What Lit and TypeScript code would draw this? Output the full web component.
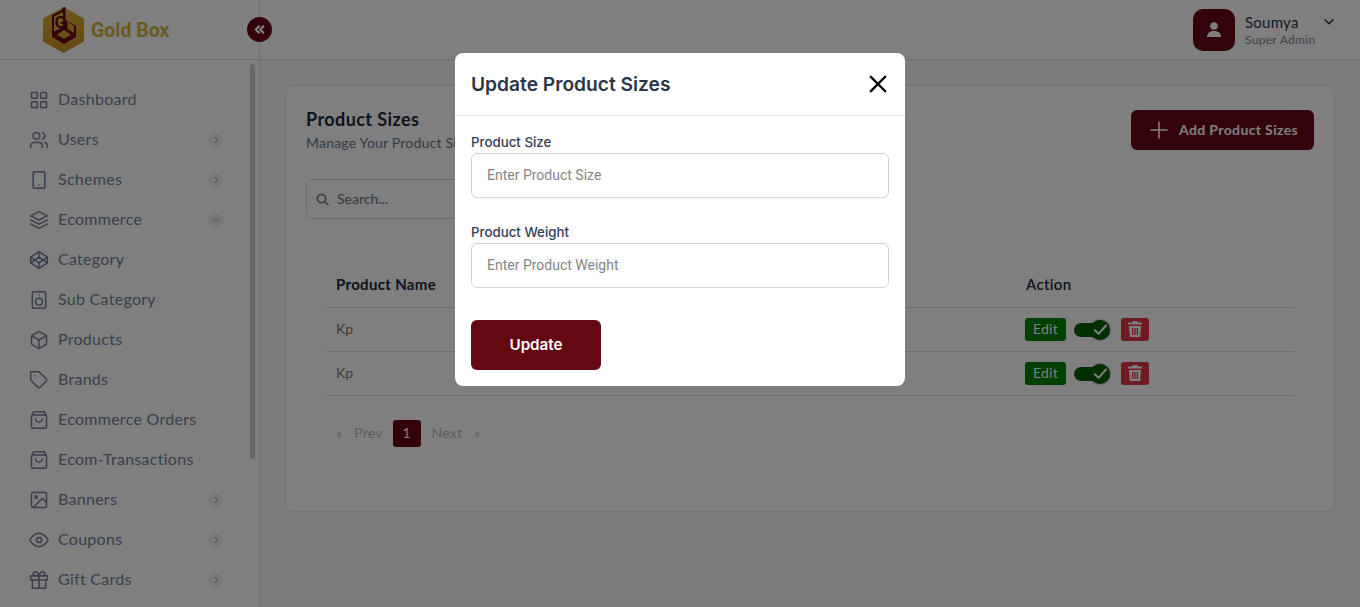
import { LitElement, html, css, svg } from "lit";
import { customElement } from "lit/decorators.js";

const icons: Record<string, any> = {
  grid: svg`<rect x="3" y="3" width="7" height="7" rx="1"/><rect x="14" y="3" width="7" height="7" rx="1"/><rect x="14" y="14" width="7" height="7" rx="1"/><rect x="3" y="14" width="7" height="7" rx="1"/>`,
  users: svg`<path d="M16 21v-2a4 4 0 0 0-4-4H6a4 4 0 0 0-4 4v2"/><circle cx="9" cy="7" r="4"/><path d="M22 21v-2a4 4 0 0 0-3-3.87"/><path d="M16 3.13a4 4 0 0 1 0 7.75"/>`,
  tablet: svg`<rect x="5" y="2" width="14" height="20" rx="2"/><line x1="12" y1="18" x2="12.01" y2="18"/>`,
  layers: svg`<path d="M12 2 2 7l10 5 10-5-10-5z"/><path d="m2 17 10 5 10-5"/><path d="m2 12 10 5 10-5"/>`,
  codepen: svg`<path d="M12 2 22 8.5v7L12 22 2 15.5v-7L12 2z"/><path d="M12 22v-6.5"/><path d="M22 8.5l-10 7-10-7"/><path d="M2 15.5l10-7 10 7"/><path d="M12 2v6.5"/>`,
  speaker: svg`<rect x="4" y="2" width="16" height="20" rx="2"/><circle cx="12" cy="14" r="4"/><line x1="12" y1="6" x2="12.01" y2="6"/>`,
  box: svg`<path d="M21 16V8a2 2 0 0 0-1-1.73l-7-4a2 2 0 0 0-2 0l-7 4A2 2 0 0 0 3 8v8a2 2 0 0 0 1 1.73l7 4a2 2 0 0 0 2 0l7-4A2 2 0 0 0 21 16z"/><path d="M3.3 7 12 12l8.7-5"/><path d="M12 22V12"/>`,
  tag: svg`<path d="M20.6 13.4l-7.2 7.2a2 2 0 0 1-2.8 0L2 12V2h10l8.6 8.6a2 2 0 0 1 0 2.8z"/><line x1="7" y1="7" x2="7.01" y2="7"/>`,
  bag: svg`<path d="M6 2h12"/><path d="M6 2 3.500 6M18 2l2.500 4"/><rect x="3" y="6" width="18" height="16" rx="2"/><path d="M8 10.500a4 4 0 0 0 8 0"/>`,
  image: svg`<rect x="3" y="3" width="18" height="18" rx="2"/><circle cx="8.500" cy="8.500" r="1.500"/><path d="M21 15l-5-5L5 21"/>`,
  eye: svg`<path d="M1 12s4-8 11-8 11 8 11 8-4 8-11 8-11-8-11-8z"/><circle cx="12" cy="12" r="3"/>`,
  gift: svg`<polyline points="20 12 20 22 4 22 4 12"/><rect x="2" y="7" width="20" height="5"/><line x1="12" y1="22" x2="12" y2="7"/><path d="M12 7H7.500a2.500 2.500 0 0 1 0-5C11 2 12 7 12 7z"/><path d="M12 7h4.500a2.500 2.500 0 0 0 0-5C13 2 12 7 12 7z"/>`,
};

const menu: [string, string, string][] = [
  ["grid", "Dashboard", ""],
  ["users", "Users", "r"],
  ["tablet", "Schemes", "r"],
  ["layers", "Ecommerce", "d"],
  ["codepen", "Category", ""],
  ["speaker", "Sub Category", ""],
  ["box", "Products", ""],
  ["tag", "Brands", ""],
  ["bag", "Ecommerce Orders", ""],
  ["bag", "Ecom-Transactions", ""],
  ["image", "Banners", "r"],
  ["eye", "Coupons", "r"],
  ["gift", "Gift Cards", "r"],
];

@customElement("app-root")
export class AppRoot extends LitElement {
  static styles = css`
    :host { display: block; height: 607px; overflow: hidden; position: relative; font-family: "Lato", "Noto Sans", sans-serif; color: #1e293b; background: #f7f7f7; }
    * { box-sizing: border-box; }
    .header { height: 60px; background: #fff; border-bottom: 1px solid #dcdcdc; display: flex; align-items: center; position: relative; }
    .brand { width: 260px; height: 59px; display: flex; align-items: center; padding-left: 43px; gap: 7px; border-right: 1px solid #dcdcdc; }
    .brand svg { width: 41px; height: 46px; display: block; }
    .brand span { font: 700 19.500px "Roboto", sans-serif; color: #d6b53f; padding-top: 2px; }
    .collapse { position: absolute; left: 247px; top: 17px; width: 25px; height: 25px; border-radius: 50%; background: #640812; display: flex; align-items: center; justify-content: center; }
    .collapse svg { width: 15px; height: 15px; fill: none; stroke: #fff; stroke-width: 3.4; stroke-linecap: round; stroke-linejoin: round; }
    .user { margin-left: auto; display: flex; align-items: center; padding-right: 24px; }
    .avatar { width: 42px; height: 42px; border-radius: 10px; background: #640812; display: flex; align-items: center; justify-content: center; margin-right: 10px; }
    .avatar svg { width: 16px; height: 16px; fill: #fff; }
    .uname { font-size: 15px; line-height: 20px; color: #2a3650; letter-spacing: .25px; }
    .urole { font-size: 12px; line-height: 16px; color: #7c8494; letter-spacing: .3px; }
    .uinfo { width: 77px; }
    .chev { width: 14px; height: 14px; fill: none; stroke: #1e293b; stroke-width: 2.4; stroke-linecap: round; stroke-linejoin: round; margin-bottom: 15px; }
    .body { display: flex; height: 547px; }
    .side { width: 260px; flex: none; background: #fff; border-right: 1px solid #dcdcdc; padding: 20px 0 0 29px; position: relative; overflow: hidden; }
    .bar { position: absolute; left: 250px; top: 4px; width: 5px; height: 395px; border-radius: 3px; background: #cfcfcf; }
    .item { display: flex; align-items: center; height: 40px; padding-right: 36px; color: #737c96; font-size: 16px; letter-spacing: .28px; }
    .item span { padding-bottom: 4px; }
    .item svg.ic { width: 20px; height: 20px; fill: none; stroke: currentColor; stroke-width: 1.8; stroke-linecap: round; stroke-linejoin: round; margin-right: 9px; flex: none; }
    .arrow { margin-left: auto; width: 15px; height: 15px; border-radius: 50%; background: #f0f1f3; display: flex; align-items: center; justify-content: center; }
    .arrow svg { width: 10px; height: 10px; fill: none; stroke: #737c96; stroke-width: 2; stroke-linecap: round; stroke-linejoin: round; }
    .main { flex: 1; padding: 25px 25px 0 25px; }
    .card { height: 427px; background: #fff; border: 1px solid #e4e4e4; border-radius: 8px; padding: 20px 20px 0 20px; }
    .top { display: flex; justify-content: space-between; align-items: flex-start; }
    h2 { margin: 0; font-size: 18px; line-height: 26px; font-weight: 700; color: #1e293b; letter-spacing: .42px; }
    .sub { font-size: 14px; line-height: 20px; color: #64748b; margin-top: 1px; letter-spacing: .2px; }
    .add { margin-top: 4px; width: 183px; height: 40px; border-radius: 6px; background: #640812; color: #fff; font-size: 14px; font-weight: 700; display: flex; align-items: center; padding: 0 0 2px 19px; gap: 11px; letter-spacing: .37px; }
    .add svg { width: 18px; height: 18px; stroke: #fff; stroke-width: 1.6; fill: none; stroke-linecap: round; margin-top: 2px; }
    .search { margin-top: 26px; width: 300px; height: 40px; border: 1px solid #d4d7dd; border-radius: 6px; display: flex; align-items: center; padding-left: 9px; gap: 8px; color: #64748b; font-size: 14px; }
    .search span { padding-bottom: 2px; }
    .search svg { width: 13px; height: 13px; fill: none; stroke: #64748b; stroke-width: 1.6; stroke-linecap: round; }
    table { margin: 44px 0 0 20px; width: 969px; border-collapse: collapse; font-size: 14px; }
    th { text-align: left; height: 44px; padding: 0 10px 1px; font-size: 15px; font-weight: 700; border-bottom: 1px solid #dcdee3; color: #1e293b; letter-spacing: .32px; }
    td { height: 44px; padding: 0 10px 2px; border-bottom: 1px solid #dcdee3; color: #5f7f88; }
    td.ac { padding: 0; }
    .ac { width: 270px; padding-left: 0; }
    th.ac { font-weight: 600; padding-left: 1px; }
    .acts { display: flex; align-items: center; }
    .edit { width: 41px; height: 23px; border-radius: 3px; background: #008000; color: #fff; font-size: 14px; letter-spacing: .3px; padding-bottom: 1px; display: flex; align-items: center; justify-content: center; }
    .tog { margin-left: 8px; width: 36px; height: 23px; position: relative; }
    .track { position: absolute; left: 0; top: 5px; width: 28px; height: 14px; border-radius: 7px; background: #005f00; }
    .knob { position: absolute; left: 16px; top: 2px; width: 20px; height: 20px; border-radius: 50%; background: #005f00; box-shadow: 0 0 2px rgba(0,0,0,.7); display: flex; align-items: center; justify-content: center; }
    .knob svg { width: 19px; height: 19px; fill: none; stroke: #fff; stroke-width: 2.6; stroke-linecap: round; stroke-linejoin: round; }
    .del { margin-left: 11px; width: 28px; height: 23px; border-radius: 3px; background: #dc3545; display: flex; align-items: center; justify-content: center; }
    .del svg { width: 14px; height: 16px; fill: #fff; }
    .pager { margin: 24px 0 0 30px; height: 27px; display: flex; align-items: center; font-size: 14px; color: #bdbdbd; letter-spacing: .2px; }
    .pager span { padding-bottom: 2px; }
    .pager .gap { margin-left: 12px; }
    .pager .one { width: 28px; height: 27px; border-radius: 3px; background: #640812; color: #fff; padding-bottom: 2px; display: flex; align-items: center; justify-content: center; margin: 0 11px 0 10px; }
    .overlay { position: absolute; inset: 0; background: rgba(0,0,0,.5); }
    .modal { position: absolute; left: 455px; top: 53px; width: 450px; height: 333px; background: #fff; border-radius: 8px; font-family: "Inter", sans-serif; }
    .mh { height: 63px; border-bottom: 1px solid #e2e8f0; display: flex; align-items: center; justify-content: space-between; padding: 0 17px 0 16px; }
    .mh span { font-size: 19.200px; font-weight: 600; color: #2a3546; padding-bottom: 1px; }
    .mh svg { width: 20px; height: 20px; stroke: #000; stroke-width: 2.4; fill: none; stroke-linecap: square; }
    .mb { padding: 18px 16px 0 16px; }
    label { display: block; font-size: 13.300px; line-height: 17px; font-weight: 500; color: #334155; }
    .input { margin-top: 2px; height: 45px; border: 1px solid #cbd5e1; border-radius: 6px; padding: 0 0 1px 15px; display: flex; align-items: center; font: 400 14px "Roboto", sans-serif; color: #858585; margin-bottom: 26px; }
    .update { margin-top: 32px; width: 130px; height: 50px; border-radius: 6px; background: #640812; color: #fff; font-size: 15.200px; font-weight: 600; padding-bottom: 2px; display: flex; align-items: center; justify-content: center; }
  `;

  private row() {
    return html`<tr><td>Kp</td><td></td><td class="ac"><div class="acts">
      <div class="edit">Edit</div>
      <div class="tog"><div class="track"></div><div class="knob"><svg viewBox="0 0 24 24"><path d="M5 13l4.500 4.500L19 7"/></svg></div></div>
      <div class="del"><svg viewBox="0 0 14 16"><path d="M5 0h4l1 1.500h4V3.500H0V1.500h4zM1 5h12l-.8 11H1.800zM4 7v7h1.300V7zM6.350 7v7h1.300V7zM8.700 7v7H10V7z" fill-rule="evenodd"/></svg></div>
    </div></td></tr>`;
  }

  render() {
    return html`
      <div class="header">
        <div class="brand">
          <svg viewBox="0 0 41 46">
            <defs><linearGradient id="g" x1="0" y1="0" x2="0" y2="1"><stop offset="0" stop-color="#d6b23e"/><stop offset="1" stop-color="#c9921e"/></linearGradient></defs>
            <path d="M20.500 0 41 11.500v23L20.500 46 0 34.500v-23z" fill="url(#g)"/>
            <path d="M9 8 19 3 20 0.500 22.500 0V13L33 19V30L21 37 9 30zM24.500 14.500V22L31 26V19zM14 27.500 21 32 28 27.500 21 23z" fill="#640812" fill-rule="evenodd"/>
            <path d="M11 9.500 20 5V20L11 24.500z" fill="#d6b23e"/>
            <text x="11.500" y="21" font-family="Roboto, sans-serif" font-weight="700" font-size="17" fill="#640812">G</text>
          </svg>
          <span>Gold Box</span>
        </div>
        <div class="collapse"><svg viewBox="0 0 24 24"><path d="M11 17l-5-5 5-5M18 17l-5-5 5-5"/></svg></div>
        <div class="user">
          <div class="avatar"><svg viewBox="0 0 16 16"><circle cx="8" cy="4" r="3.800"/><path d="M1 15c0-4 3-6 7-6s7 2 7 6z"/></svg></div>
          <div class="uinfo"><div class="uname">Soumya</div><div class="urole">Super Admin</div></div>
          <svg class="chev" viewBox="0 0 24 24"><path d="M5 8l7 7 7-7"/></svg>
        </div>
      </div>
      <div class="body">
        <div class="side">
          <div class="bar"></div>
          ${menu.map(([ic, label, a]) => html`<div class="item">
            <svg class="ic" viewBox="0 0 24 24">${icons[ic]}</svg><span>${label}</span>
            ${a ? html`<div class="arrow"><svg viewBox="0 0 24 24"><path d="${a === "r" ? "M9 5l7 7-7 7" : "M5 9l7 7 7-7"}"/></svg></div>` : ""}
          </div>`)}
        </div>
        <div class="main">
          <div class="card">
            <div class="top">
              <div><h2>Product Sizes</h2><div class="sub">Manage Your Product Sizes</div></div>
              <div class="add"><svg viewBox="0 0 18 18"><path d="M9 1v16M1 9h16"/></svg>Add Product Sizes</div>
            </div>
            <div class="search"><svg viewBox="0 0 14 14"><circle cx="6" cy="6" r="4.500"/><path d="M9.500 9.500 13 13"/></svg><span>Search...</span></div>
            <table>
              <tr><th>Product Name</th><th></th><th class="ac">Action</th></tr>
              ${this.row()}${this.row()}
            </table>
            <div class="pager"><span>«</span><span class="gap">Prev</span><div class="one">1</div><span>Next</span><span class="gap">»</span></div>
          </div>
        </div>
      </div>
      <div class="overlay"></div>
      <div class="modal">
        <div class="mh"><span>Update Product Sizes</span><svg viewBox="0 0 20 20"><path d="M3 3l14 14M17 3 3 17"/></svg></div>
        <div class="mb">
          <label>Product Size</label><div class="input">Enter Product Size</div>
          <label>Product Weight</label><div class="input">Enter Product Weight</div>
          <div class="update">Update</div>
        </div>
      </div>
    `;
  }
}
